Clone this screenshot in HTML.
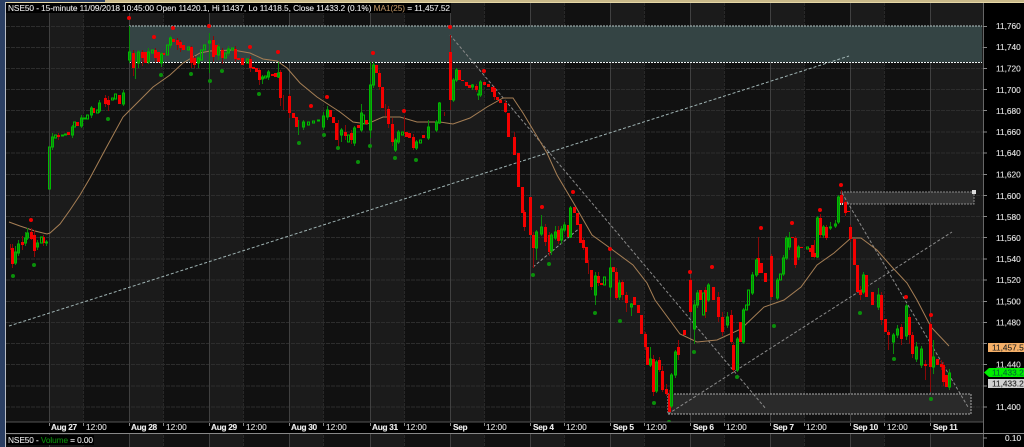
<!DOCTYPE html>
<html><head><meta charset="utf-8"><style>
html,body{margin:0;padding:0;background:#000;width:1024px;height:447px;overflow:hidden}
svg{display:block;filter:blur(.25px)}
text{font-family:"Liberation Sans",sans-serif;font-size:8.3px;fill:#e4e4e4;stroke:#e4e4e4;stroke-width:.12px}
.d{font-weight:bold;fill:#eee;letter-spacing:-.3px}
.t{fill:#ddd}
tspan.m{fill:#b48d60;stroke:#b48d60}
tspan.v{fill:#0a8a0a;stroke:#0a8a0a}
.k{fill:#222;stroke:#222}
.g{fill:#063;stroke:#063}
</style></head><body>
<svg width="1024" height="447" viewBox="0 0 1024 447" xmlns="http://www.w3.org/2000/svg">
<rect width="1024" height="447" fill="#000"/>
<rect x="6" y="3" width="977" height="444" fill="#111"/>
<g fill="#1b1b1b">
<rect x="49" y="3" width="34" height="444"/><rect x="129" y="3" width="34" height="444"/><rect x="209" y="3" width="34" height="444"/><rect x="289" y="3" width="34" height="444"/><rect x="370" y="3" width="34" height="444"/><rect x="450" y="3" width="34" height="444"/><rect x="530" y="3" width="34" height="444"/><rect x="610" y="3" width="34" height="444"/><rect x="690" y="3" width="34" height="444"/><rect x="770" y="3" width="34" height="444"/><rect x="850" y="3" width="34" height="444"/><rect x="930" y="3" width="53" height="444"/>
</g>
<path d="M6 26.500H983M6 47.500H983M6 68.500H983M6 89.500H983M6 110.500H983M6 132H983M6 153H983M6 174.500H983M6 195.500H983M6 216.500H983M6 237.500H983M6 259H983M6 280H983M6 301.500H983M6 322.500H983M6 343.500H983M6 364.500H983M6 386H983M6 407H983" stroke="#2d2d2d" stroke-dasharray="4 1" fill="none"/>
<path d="M83.500 3V447M163.500 3V447M243.500 3V447M323.500 3V447M404.500 3V447M484.500 3V447M564.500 3V447M644.500 3V447M724.500 3V447M804.500 3V447M884.500 3V447" stroke="#282828" stroke-dasharray="3 1" fill="none"/>
<path d="M49.500 3V447M129.500 3V447M209.500 3V447M289.500 3V447M370.500 3V447M450.500 3V447M530.500 3V447M610.500 3V447M690.500 3V447M770.500 3V447M850.500 3V447M930.500 3V447" stroke="#404040" fill="none"/>

<!-- left frame and top frame -->
<rect x="0" y="0" width="5" height="447" fill="#2b3f63"/>
<rect x="5" y="0" width="1" height="447" fill="#b8bcc4"/>
<rect x="0" y="0" width="105" height="2" fill="#2b3f63"/>
<rect x="105" y="0" width="919" height="2" fill="#c9b98a"/>
<rect x="6" y="2" width="1018" height="1" fill="#e6d8a6"/>

<!-- zones -->
<rect x="129" y="26" width="853" height="36" fill="#344444"/>
<path d="M129 26H982" stroke="#b9c9c9" stroke-dasharray="2 1" fill="none"/>
<path d="M129 62.500H982" stroke="#f0f5f5" stroke-dasharray="2 1" fill="none"/>
<rect x="841" y="192" width="133" height="12" fill="#333" stroke="#8a8a8a" stroke-dasharray="2 1"/>
<rect x="668" y="394" width="303" height="20" fill="#2a2a2a" stroke="#aaa" stroke-dasharray="2 1"/>

<!-- dashed trend lines -->
<g fill="none" stroke-dasharray="3 2">
<path d="M9 326L849 56" stroke="#9fb3b3"/>
<path d="M450 35L766 409" stroke="#8a8a8a"/>
<path d="M533 267L581 227" stroke="#999"/>
<path d="M668 414L952 232" stroke="#8a8a8a"/>
<path d="M842 193L968 407" stroke="#8a8a8a"/>
</g>
<rect x="972" y="190" width="4" height="4" fill="#ddd"/>
<rect x="839" y="201" width="4" height="4" fill="#ddd"/>

<!-- MA line -->
<path d="M9 222L20 226L35 231L47 234L50 233L60 224L70 210L80 195L90 178L105 150L123 117L130 110L153 87L170 75L183 63L200 53L210 51L233 50L250 53L263 59L277 61L287 68L300 83L317 97L340 112L353 122L367 124L383 117L400 117L417 122L440 122L453 124L470 118L487 107L503 98L513 98L523 113L535 133L547 153L557 175L573 202L592 235L610 248L633 265L647 283L655 300L680 334L697 342L717 340L741 329L764 307L784 300L801 287L817 265L834 253L851 238L861 238L877 250L892 267L907 283L917 300L931 327L949 346" fill="none" stroke="#a67f55" stroke-width="1"/>

<!-- wicks -->
<path fill="none" stroke="#8a0808" d="M10.500 244V250M12.500 244V268M22.500 236V250M31.500 228V240M34.500 230V257M43.500 235V246M58.500 133V140M105.500 95V107M108.500 96V111M133.500 50V76M142.500 50V66M155.500 48V62M177.500 38V50M180.500 40V52M191.500 46V68M194.500 56V68M213.500 36V62M222.500 48V64M235.500 46V62M250.500 56V72M259.500 68V85M280.500 70V106M283.500 95V110M289.500 94V118M338.500 120V148M345.500 125V140M351.500 130V144M379.500 70V90M385.500 104V116M388.500 106V128M392.500 118V146M404.500 116V134M413.500 134V150M444.500 112V116M450.500 35V110M476.500 84V92M494.500 86V100M505.500 100V113M514.500 132V150M524.500 210V231M533.500 232V268M545.500 224V246M549.500 232V256M558.500 226V244M583.500 238V250M588.500 260V274M591.500 270V290M598.500 272V286M616.500 268V300M622.500 280V300M626.500 292V312M645.500 332V350M653.500 355V396M659.500 357V372M662.500 366V392M666.500 384V396M669.500 390V412M678.500 340V360M690.500 278V312M705.500 287V318M718.500 292V322M722.500 312V336M731.500 310V344M733.500 342V372M758.500 237V275M771.500 254V300M795.500 236V268M814.500 240V258M820.500 214V238M826.500 225V240M841.500 190V205M845.500 200V216M850.500 225V242M860.500 286V300M881.500 292V325M888.500 330V350M901.500 324V345M909.500 314V344M912.500 332V358M925.500 360V380M930.500 322V392M941.500 360V370M943.500 362V386"/>
<path fill="none" stroke="#0a8a0a" d="M15.500 246V265M18.500 240V256M25.500 232V246M27.500 228V240M37.500 240V250M46.500 240V246M52.500 133V150M72.500 125V138M81.500 115V128M91.500 106V118M99.500 100V113M123.500 90V106M129.500 26V63M135.500 52V79M138.500 50V68M148.500 48V64M161.500 52V67M170.500 36V48M198.500 56V68M209.500 33V73M218.500 44V60M228.500 46V56M262.500 75V84M268.500 70V80M278.500 62V78M298.500 120V135M303.500 120V130M323.500 112V130M327.500 106V120M341.500 128V142M354.500 126V146M361.500 104V132M370.500 62V138M373.500 62V88M395.500 138V152M398.500 130V144M416.500 140V150M428.500 120V140M436.500 120V132M439.500 102V124M453.500 78V102M456.500 68V82M472.500 84V90M478.500 90V100M480.500 80V97M536.500 230V260M541.500 215V236M551.500 233V255M555.500 226V240M561.500 226V244M564.500 222V232M570.500 206V238M595.500 272V305M610.500 257V297M619.500 280V300M631.500 303V316M650.500 347V367M656.500 360V393M671.500 373V408M675.500 350V378M694.500 300V344M697.500 290V308M708.500 283V302M727.500 312V328M737.500 337V372M743.500 308V344M752.500 272V295M756.500 258V277M777.500 278V300M783.500 255V276M786.500 236V260M789.500 232V250M798.500 245V260M817.500 216V258M823.500 225V238M830.500 222V230M835.500 220V228M838.500 195V224M863.500 272V294M878.500 288V310M893.500 333V354M897.500 325V338M906.500 304V340M916.500 342V362M921.500 346V368M933.500 340V374M949.500 369V390"/>

<!-- red bodies -->
<path fill="none" stroke="#f40000" stroke-width="3" d="M12.500 248V264M22.500 242V245M31.500 232V239M34.500 235V251M43.500 237V243M58.500 135V137M68.500 132V135M77.500 122V126M93.500 108V113M105.500 98V104M108.500 100V105M119.500 95V104M133.500 53V68M142.500 52V58M145.500 52V63M155.500 50V58M158.500 52V62M163.500 53V55M173.500 39V42M177.500 40V45M180.500 42V48M183.500 45V50M191.500 47V63M194.500 58V65M213.500 40V57M216.500 45V55M222.500 50V58M235.500 49V59M238.500 58V60M242.500 58V65M250.500 59V68M253.500 67V69M256.500 68V72M259.500 70V80M272.500 74V76M275.500 73V77M280.500 72V98M289.500 96V113M293.500 113V118M296.500 117V127M330.500 110V117M333.500 117V123M336.500 123V140M345.500 132V136M351.500 133V140M358.500 125V128M366.500 120V124M376.500 65V73M379.500 73V87M382.500 87V108M388.500 109V124M392.500 124V142M406.500 132V137M409.500 133V138M413.500 137V148M423.500 135V138M450.500 52V100M459.500 70V80M462.500 80V81M466.500 82V86M469.500 85V88M476.500 86V90M484.500 82V85M488.500 84V87M492.500 87V92M494.500 88V97M497.500 97V100M500.500 100V103M505.500 103V112M508.500 113V137M514.500 137V155M518.500 153V187M522.500 187V213M524.500 212V227M530.500 197V235M533.500 235V248M545.500 227V242M549.500 235V252M558.500 230V241M568.500 225V237M574.500 207V213M577.500 213V225M580.500 224V243M583.500 240V248M586.500 247V263M591.500 270V287M598.500 276V283M601.500 283V285M613.500 267V272M616.500 272V298M622.500 282V295M626.500 295V303M634.500 297V305M638.500 305V313M641.500 315V334M645.500 334V347M647.500 347V365M653.500 359V392M659.500 360V370M662.500 371V390M666.500 389V394M669.500 394V412M678.500 347V355M684.500 330V335M690.500 280V312M700.500 290V300M705.500 290V312M713.500 287V300M718.500 297V317M722.500 317V332M731.500 315V342M733.500 345V370M740.500 322V342M758.500 258V273M761.500 263V273M765.500 273V282M771.500 256V297M792.500 237V238M795.500 238V265M801.500 247V248M810.500 248V252M812.500 245V257M814.500 253V257M820.500 218V235M826.500 227V238M841.500 195V203M845.500 202V213M848.500 211V212M850.500 227V239M854.500 239V265M857.500 265V292M860.500 290V295M866.500 275V297M872.500 292V305M881.500 295V320M885.500 319V332M888.500 332V335M901.500 327V339M909.500 317V335M912.500 335V354M925.500 364V366M930.500 324V367M937.500 359V365M941.500 364V367M943.500 365V382M946.500 375V387"/>

<!-- green hollow bodies -->
<path fill="none" stroke="#0b0" d="M14.500 252h2V263h-2zM17.500 244h2V253h-2zM24.500 238h2V243h-2zM26.500 233h2V238h-2zM36.500 243h2V247h-2zM40.500 237h2V243h-2zM45.500 242h2V243h-2zM48.500 147h2V189h-2zM51.500 137h2V147h-2zM54.500 135h2V138h-2zM61.500 135h2V136h-2zM64.500 134h2V135h-2zM71.500 127h2V135h-2zM73.500 122h2V127h-2zM80.500 118h2V126h-2zM83.500 118h2V119h-2zM86.500 115h2V119h-2zM90.500 108h2V115h-2zM96.500 110h2V113h-2zM98.500 103h2V111h-2zM111.500 98h2V100h-2zM114.500 94h2V99h-2zM122.500 93h2V104h-2zM128.500 52h2V60h-2zM137.500 52h2V63h-2zM147.500 52h2V62h-2zM151.500 50h2V53h-2zM160.500 54h2V63h-2zM166.500 45h2V55h-2zM169.500 38h2V45h-2zM187.500 47h2V50h-2zM197.500 58h2V63h-2zM200.500 50h2V60h-2zM203.500 45h2V50h-2zM208.500 41h2V43h-2zM217.500 47h2V55h-2zM224.500 53h2V58h-2zM227.500 49h2V53h-2zM231.500 48h2V50h-2zM246.500 59h2V63h-2zM261.500 77h2V79h-2zM264.500 76h2V78h-2zM267.500 72h2V77h-2zM277.500 73h2V77h-2zM302.500 122h2V127h-2zM307.500 122h2V125h-2zM312.500 121h2V123h-2zM317.500 120h2V121h-2zM322.500 116h2V127h-2zM326.500 110h2V117h-2zM340.500 130h2V135h-2zM347.500 135h2V142h-2zM353.500 128h2V143h-2zM360.500 113h2V130h-2zM362.500 115h2V124h-2zM369.500 85h2V130h-2zM372.500 65h2V85h-2zM394.500 140h2V150h-2zM397.500 132h2V142h-2zM401.500 132h2V135h-2zM415.500 142h2V148h-2zM419.500 140h2V143h-2zM427.500 127h2V138h-2zM435.500 122h2V130h-2zM438.500 103h2V123h-2zM452.500 80h2V100h-2zM455.500 70h2V80h-2zM471.500 85h2V87h-2zM477.500 94h2V95h-2zM479.500 82h2V95h-2zM535.500 232h2V248h-2zM540.500 227h2V234h-2zM550.500 235h2V251h-2zM554.500 232h2V238h-2zM560.500 229h2V240h-2zM563.500 225h2V230h-2zM569.500 208h2V237h-2zM594.500 276h2V295h-2zM603.500 277h2V285h-2zM609.500 268h2V287h-2zM618.500 283h2V297h-2zM630.500 304h2V307h-2zM649.500 359h2V365h-2zM655.500 362h2V391h-2zM670.500 375h2V406h-2zM674.500 352h2V375h-2zM693.500 305h2V329h-2zM696.500 293h2V305h-2zM702.500 293h2V315h-2zM707.500 285h2V300h-2zM726.500 317h2V325h-2zM736.500 339h2V370h-2zM742.500 310h2V342h-2zM745.500 305h2V310h-2zM747.500 290h2V305h-2zM751.500 275h2V293h-2zM755.500 260h2V275h-2zM776.500 280h2V298h-2zM779.500 274h2V280h-2zM782.500 258h2V274h-2zM785.500 238h2V258h-2zM788.500 238h2V247h-2zM797.500 247h2V257h-2zM806.500 247h2V249h-2zM816.500 218h2V257h-2zM822.500 227h2V235h-2zM829.500 227h2V228h-2zM834.500 224h2V226h-2zM837.500 197h2V222h-2zM862.500 275h2V292h-2zM877.500 295h2V307h-2zM892.500 335h2V342h-2zM896.500 329h2V335h-2zM905.500 306h2V336h-2zM915.500 347h2V359h-2zM920.500 349h2V365h-2zM932.500 357h2V367h-2zM948.500 373h2V387h-2z"/>

<!-- pivots: red -->
<g fill="#f00000">
<circle cx="31" cy="220" r="2"/><circle cx="129" cy="18" r="2"/><circle cx="154" cy="37" r="2"/><circle cx="173" cy="28" r="2"/><circle cx="209" cy="26" r="2"/><circle cx="250" cy="47" r="2"/><circle cx="278" cy="52" r="2"/><circle cx="311" cy="106" r="2"/><circle cx="327" cy="97" r="2"/><circle cx="373" cy="53" r="2"/><circle cx="404" cy="111" r="2"/><circle cx="450" cy="27" r="2"/><circle cx="484" cy="71" r="2"/><circle cx="542" cy="207" r="2"/><circle cx="573" cy="192" r="2"/><circle cx="610" cy="249" r="2"/><circle cx="690" cy="272" r="2"/><circle cx="712" cy="267" r="2"/><circle cx="761" cy="228" r="2"/><circle cx="792" cy="223" r="2"/><circle cx="820" cy="210" r="2"/><circle cx="841" cy="185" r="2"/><circle cx="906" cy="297" r="2"/><circle cx="931" cy="315" r="2"/>
</g>
<!-- pivots: green -->
<g fill="#0a900a">
<circle cx="13" cy="276" r="2"/><circle cx="34" cy="265" r="2"/><circle cx="108" cy="119" r="2"/><circle cx="161" cy="75" r="2"/><circle cx="191" cy="74" r="2"/><circle cx="210" cy="81" r="2"/><circle cx="222" cy="71" r="2"/><circle cx="259" cy="94" r="2"/><circle cx="299" cy="143" r="2"/><circle cx="324" cy="135" r="2"/><circle cx="338" cy="148" r="2"/><circle cx="358" cy="162" r="2"/><circle cx="370" cy="146" r="2"/><circle cx="395" cy="158" r="2"/><circle cx="416" cy="160" r="2"/><circle cx="533" cy="275" r="2"/><circle cx="549" cy="264" r="2"/><circle cx="595" cy="313" r="2"/><circle cx="620" cy="321" r="2"/><circle cx="654" cy="403" r="2"/><circle cx="669" cy="422" r="2"/><circle cx="694" cy="352" r="2"/><circle cx="737" cy="377" r="2"/><circle cx="774" cy="326" r="2"/><circle cx="860" cy="313" r="2"/><circle cx="894" cy="359" r="2"/><circle cx="931" cy="399" r="2"/>
</g>

<!-- header -->
<rect x="6" y="3" width="445" height="10" fill="#000"/>
<text x="8" y="11" textLength="442" lengthAdjust="spacing">NSE50 - 15-minute 11/09/2018 10:45:00 Open 11420.1, Hi 11437, Lo 11418.5, Close 11433.2 (0.1%) <tspan class="m">MA1(25)</tspan> = 11,457.52</text>

<!-- right axis -->
<rect x="983" y="3" width="41" height="444" fill="#000"/>
<path d="M983.500 3V447" stroke="#666"/>
<path d="M983 26.500h4M983 47.500h4M983 68.500h4M983 89.500h4M983 110.500h4M983 132h4M983 153h4M983 174.500h4M983 195.500h4M983 216.500h4M983 237.500h4M983 259h4M983 280h4M983 301.500h4M983 322.500h4M983 343.500h4M983 364.500h4M983 386h4M983 407h4M983 438h4" stroke="#888"/>
<g>
<text x="996" y="29">11,760</text><text x="996" y="50">11,740</text><text x="996" y="71.500">11,720</text><text x="996" y="93">11,700</text><text x="996" y="114">11,680</text><text x="996" y="135">11,660</text><text x="996" y="156">11,640</text><text x="996" y="177.500">11,620</text><text x="996" y="199">11,600</text><text x="996" y="220">11,580</text><text x="996" y="241">11,560</text><text x="996" y="262">11,540</text><text x="996" y="283">11,520</text><text x="996" y="304.500">11,500</text><text x="996" y="325.500">11,480</text><text x="996" y="367.500">11,440</text><text x="996" y="410">11,400</text>
</g>
<rect x="988" y="343" width="36" height="9" fill="#f5b068"/>
<text class="k" x="992" y="350.500">11,457.5</text>
<path d="M984 372.500L989 368H1024V377H989Z" fill="#00ee00"/>
<text class="g" x="992" y="375.500">11,433.2</text>
<rect x="988" y="379" width="36" height="9" fill="#d0d0d0"/>
<text class="k" x="992" y="386.500">11,433.2</text>
<text x="1005" y="441">0.10</text>

<!-- bottom axis -->
<rect x="6" y="422" width="977" height="11" fill="#000"/>
<path d="M6 422H983" stroke="#555"/>
<path d="M6 433.500H1024" stroke="#888"/>
<path d="M49.500 423v3M83.500 423v3M129.500 423v3M163.500 423v3M209.500 423v3M243.500 423v3M289.500 423v3M323.500 423v3M370.500 423v3M404.500 423v3M450.500 423v3M484.500 423v3M530.500 423v3M564.500 423v3M610.500 423v3M644.500 423v3M690.500 423v3M724.500 423v3M770.500 423v3M804.500 423v3M850.500 423v3M884.500 423v3M930.500 423v3" stroke="#888"/>
<g>
<text class="d" x="51" y="430">Aug 27</text><text class="t" x="86" y="430">12:00</text>
<text class="d" x="131" y="430">Aug 28</text><text class="t" x="166" y="430">12:00</text>
<text class="d" x="211" y="430">Aug 29</text><text class="t" x="246" y="430">12:00</text>
<text class="d" x="291" y="430">Aug 30</text><text class="t" x="326" y="430">12:00</text>
<text class="d" x="372" y="430">Aug 31</text><text class="t" x="406" y="430">12:00</text>
<text class="d" x="453" y="430">Sep</text><text class="t" x="486" y="430">12:00</text>
<text class="d" x="533" y="430">Sep 4</text><text class="t" x="566" y="430">12:00</text>
<text class="d" x="613" y="430">Sep 5</text><text class="t" x="646" y="430">12:00</text>
<text class="d" x="693" y="430">Sep 6</text><text class="t" x="726" y="430">12:00</text>
<text class="d" x="773" y="430">Sep 7</text><text class="t" x="806" y="430">12:00</text>
<text class="d" x="853" y="430">Sep 10</text><text class="t" x="887" y="430">12:00</text>
<text class="d" x="933" y="430">Sep 11</text>
</g>

<!-- volume pane -->
<rect x="7" y="435" width="87" height="10" fill="#000"/>
<text x="8" y="443" textLength="85" lengthAdjust="spacing">NSE50 - <tspan class="v">Volume</tspan> = 0.00</text>
</svg>
</body></html>
